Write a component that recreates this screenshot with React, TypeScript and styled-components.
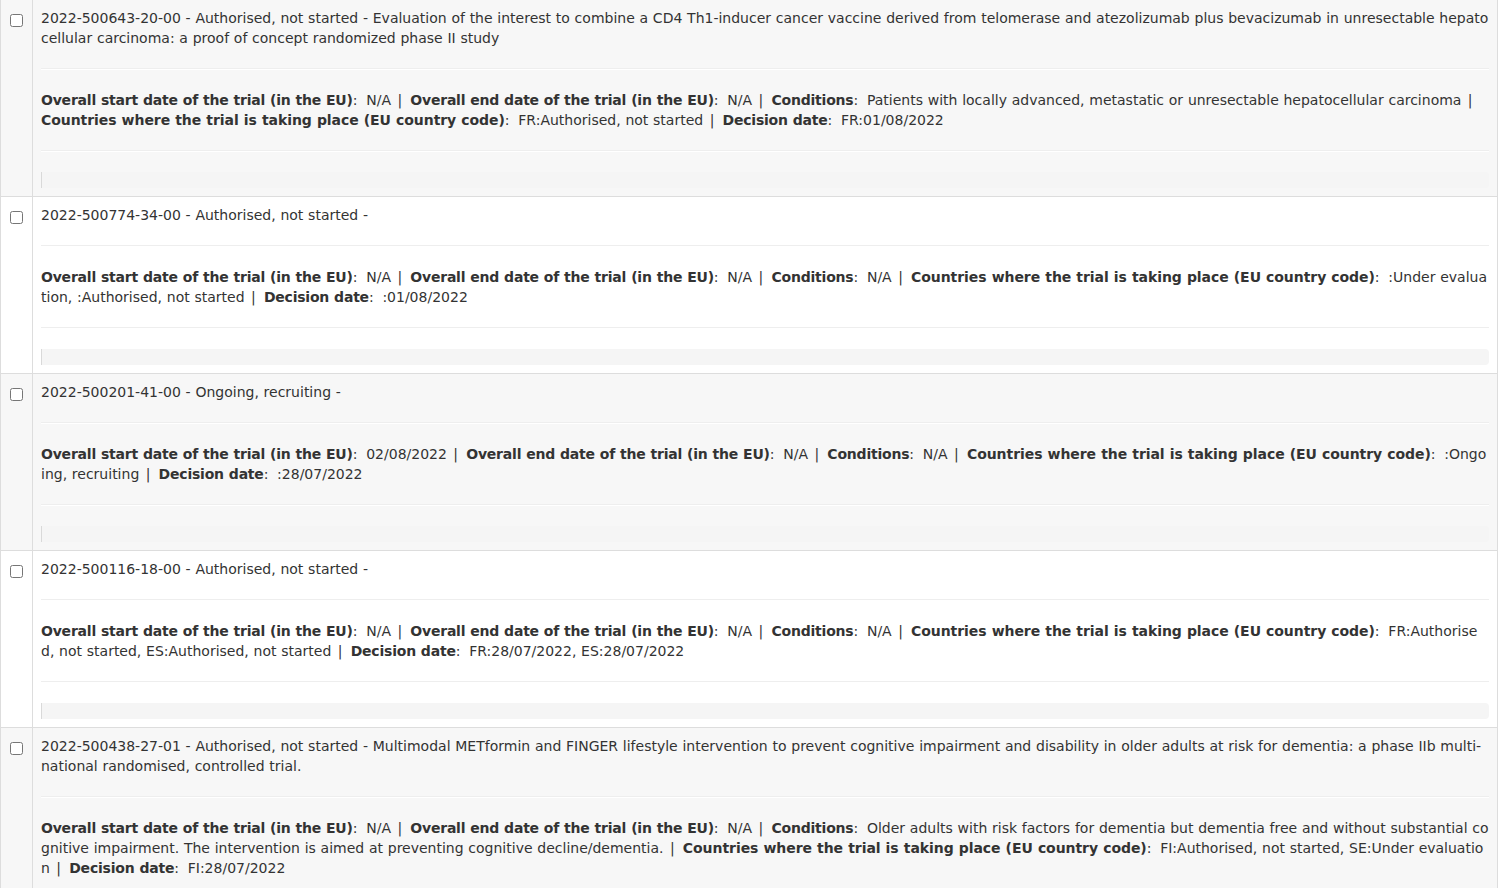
import React from "react";
import styled, { createGlobalStyle } from "styled-components";

const Global = createGlobalStyle`
  html, body { margin: 0; padding: 0; background: #ffffff; }
  body {
    font-family: Verdana, "DejaVu Sans", sans-serif;
    font-size: 14px;
    line-height: 20px;
    color: #333333;
  }
`;

const Table = styled.div`
  width: 1496px;
  border-left: 1px solid #dddddd;
  border-right: 1px solid #dddddd;
`;

const Row = styled.div<{ $striped: boolean }>`
  display: grid;
  grid-template-columns: 32px 1fr;
  border-bottom: 1px solid #dddddd;
  background: ${(p) => (p.$striped ? "#f7f7f7" : "#ffffff")};
`;

const CheckCell = styled.div`
  border-right: 1px solid #dddddd;
  display: flex;
  justify-content: center;
  align-items: flex-start;
  padding-top: 14px;
`;

const Check = styled.input`
  width: 13px;
  height: 13px;
  margin: 0;
`;

const Content = styled.div`
  padding: 8px;
  min-width: 0;
`;

const Text = styled.div`
  word-break: break-all;
  letter-spacing: 0;
  word-spacing: 0.3px;
`;

const Label = styled.b<{ $wide?: boolean }>`
  font-weight: bold;
  letter-spacing: ${(p) => (p.$wide ? "-0.06px" : "-0.21px")};
`;

const Colon = styled.span`
  letter-spacing: 2px;
`;

const Pipe = styled.span`
  letter-spacing: 1.7px;
`;

const Divider = styled.hr`
  margin: 20px 0;
  border: 0;
  border-top: 1px solid #eeeeee;
  border-bottom: 1px solid #ffffff;
  height: 0;
`;

const Notes = styled.div`
  height: 16px;
  background: #f5f5f5;
  border-left: 1px solid #d9d9d9;
  border-radius: 0 4px 4px 0;
`;

type Field = [string, string];

interface Trial {
  title: string;
  fields: Field[];
}

const START = "Overall start date of the trial (in the EU)";
const END = "Overall end date of the trial (in the EU)";
const COND = "Conditions";
const COUNTRIES = "Countries where the trial is taking place (EU country code)";
const DECISION = "Decision date";

const trials: Trial[] = [
  {
    title:
      "2022-500643-20-00 - Authorised, not started - Evaluation of the interest to combine a CD4 Th1-inducer cancer vaccine derived from telomerase and atezolizumab plus bevacizumab in unresectable hepatocellular carcinoma: a proof of concept randomized phase II study",
    fields: [
      [START, "N/A"],
      [END, "N/A"],
      [COND, "Patients with locally advanced, metastatic or unresectable hepatocellular carcinoma"],
      [COUNTRIES, "FR:Authorised, not started"],
      [DECISION, "FR:01/08/2022"],
    ],
  },
  {
    title: "2022-500774-34-00 - Authorised, not started -",
    fields: [
      [START, "N/A"],
      [END, "N/A"],
      [COND, "N/A"],
      [COUNTRIES, ":Under evaluation, :Authorised, not started"],
      [DECISION, ":01/08/2022"],
    ],
  },
  {
    title: "2022-500201-41-00 - Ongoing, recruiting -",
    fields: [
      [START, "02/08/2022"],
      [END, "N/A"],
      [COND, "N/A"],
      [COUNTRIES, ":Ongoing, recruiting"],
      [DECISION, ":28/07/2022"],
    ],
  },
  {
    title: "2022-500116-18-00 - Authorised, not started -",
    fields: [
      [START, "N/A"],
      [END, "N/A"],
      [COND, "N/A"],
      [COUNTRIES, "FR:Authorised, not started, ES:Authorised, not started"],
      [DECISION, "FR:28/07/2022, ES:28/07/2022"],
    ],
  },
  {
    title:
      "2022-500438-27-01 - Authorised, not started - Multimodal METformin and FINGER lifestyle intervention to prevent cognitive impairment and disability in older adults at risk for dementia: a phase IIb multi-national randomised, controlled trial.",
    fields: [
      [START, "N/A"],
      [END, "N/A"],
      [
        COND,
        "Older adults with risk factors for dementia but dementia free and without substantial cognitive impairment. The intervention is aimed at preventing cognitive decline/dementia.",
      ],
      [COUNTRIES, "FI:Authorised, not started, SE:Under evaluation"],
      [DECISION, "FI:28/07/2022"],
    ],
  },
];

function TrialRow({ trial, index }: { trial: Trial; index: number }) {
  return (
    <Row $striped={index % 2 === 0}>
      <CheckCell>
        <Check type="checkbox" />
      </CheckCell>
      <Content>
        <Text>{trial.title}</Text>
        <Divider />
        <Text>
          {trial.fields.map(([label, value], i) => (
            <React.Fragment key={label}>
              {i > 0 && <Pipe> | </Pipe>}
              <Label $wide={label === COUNTRIES}>{label}</Label>
              <Colon>: </Colon>
              {value}
            </React.Fragment>
          ))}
        </Text>
        <Divider />
        <Notes />
      </Content>
    </Row>
  );
}

export default function App() {
  return (
    <>
      <Global />
      <Table>
        {trials.map((t, i) => (
          <TrialRow key={t.title} trial={t} index={i} />
        ))}
      </Table>
    </>
  );
}
